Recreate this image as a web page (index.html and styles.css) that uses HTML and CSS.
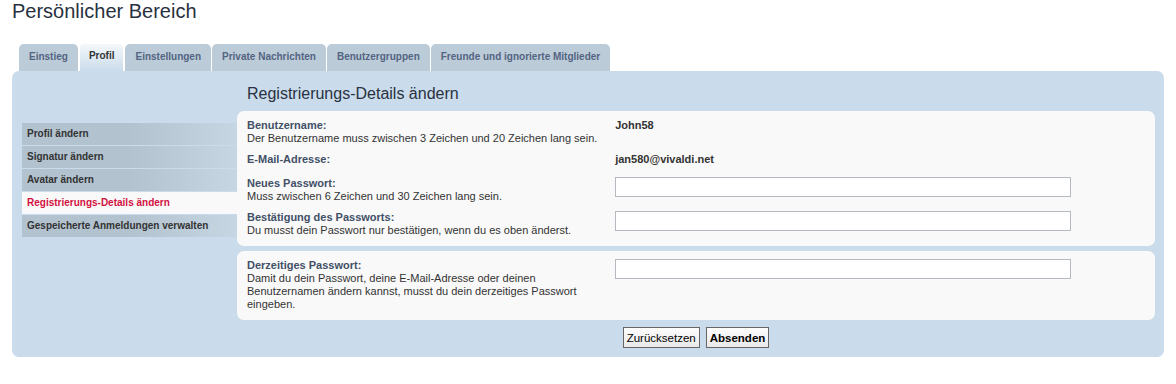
FILE: index.html
```html
<!DOCTYPE html>
<html lang="de">
<head>
  <meta charset="UTF-8" />
  <title>Persönlicher Bereich</title>
  <link rel="stylesheet" href="styles.css">
</head>
<body>

  <h1 class="seitentitel">Persönlicher Bereich</h1>

  <ul class="tabs">
    <li class="tab"><a href="#">Einstieg</a></li>
    <li class="tab aktiv"><a href="#">Profil</a></li>
    <li class="tab"><a href="#">Einstellungen</a></li>
    <li class="tab"><a href="#">Private Nachrichten</a></li>
    <li class="tab"><a href="#">Benutzergruppen</a></li>
    <li class="tab"><a href="#">Freunde und ignorierte Mitglieder</a></li>
  </ul>

  <div class="panel">
    <div class="cp-menu">
      <ul class="navigation">
        <li><a href="#">Profil ändern</a></li>
        <li><a href="#">Signatur ändern</a></li>
        <li><a href="#">Avatar ändern</a></li>
        <li class="aktiv"><a href="#">Registrierungs-Details ändern</a></li>
        <li><a href="#">Gespeicherte Anmeldungen verwalten</a></li>
      </ul>
    </div>

    <div class="cp-main">
      <h2>Registrierungs-Details ändern</h2>

      <form id="formular">
        <div class="box">
          <dl class="zeile">
            <dt><label>Benutzername:</label><br><span>Der Benutzername muss zwischen 3 Zeichen und 20 Zeichen lang sein.</span></dt>
            <dd><strong>John58</strong></dd>
          </dl>
          <dl class="zeile">
            <dt><label>E-Mail-Adresse:</label></dt>
            <dd><strong>jan580@vivaldi.net</strong></dd>
          </dl>
          <dl class="zeile">
            <dt><label for="neues_pw">Neues Passwort:</label><br><span>Muss zwischen 6 Zeichen und 30 Zeichen lang sein.</span></dt>
            <dd><input type="password" id="neues_pw" name="new_password"></dd>
          </dl>
          <dl class="zeile">
            <dt><label for="pw_bestaetigen">Bestätigung des Passworts:</label><br><span>Du musst dein Passwort nur bestätigen, wenn du es oben änderst.</span></dt>
            <dd><input type="password" id="pw_bestaetigen" name="password_confirm"></dd>
          </dl>
        </div>

        <div class="box">
          <dl class="zeile">
            <dt><label for="derzeitig">Derzeitiges Passwort:</label><br><span>Damit du dein Passwort, deine E-Mail-Adresse oder deinen Benutzernamen ändern kannst, musst du dein derzeitiges Passwort eingeben.</span></dt>
            <dd><input type="password" id="derzeitig" name="cur_password"></dd>
          </dl>
        </div>

        <div class="knoepfe">
          <button type="reset" class="knopf">Zurücksetzen</button>
          <button type="submit" class="knopf haupt">Absenden</button>
        </div>
      </form>
    </div>
  </div>

</body>
</html>
```

FILE: styles.css
```css
body {
  margin: 0;
  padding: 0 12px;
  font-family: "Liberation Sans", Arial, sans-serif;
  font-size: 11px;
  color: #333;
  background: #fff;
}

.seitentitel {
  margin: 0;
  font-size: 20px;
  font-weight: normal;
  line-height: 23px;
  color: #28313f;
}

.tabs {
  list-style: none;
  display: flex;
  align-items: flex-end;
  height: 28px;
  margin: 20px 0 0;
  padding: 0 0 0 7px;
}

.tab {
  margin-right: 1px;
}

.tab a {
  display: block;
  height: 27px;
  line-height: 25px;
  padding: 0 10px;
  box-sizing: border-box;
  background: #bccbd8;
  color: #536482;
  font-size: 10px;
  font-weight: bold;
  text-decoration: none;
  border-radius: 5px 5px 0 0;
}

.tab.aktiv a {
  height: 28px;
  line-height: 24px;
  color: #333;
  background: linear-gradient(to bottom, #f4f8fb, #cadceb);
  border: 1px solid #fff;
  border-bottom: none;
  padding: 0 9px;
}

.panel {
  display: flex;
  background: #cadceb;
  border-radius: 7px;
  padding-bottom: 9px;
}

.cp-menu {
  width: 215px;
  margin-left: 10px;
  padding-top: 52px;
}

.navigation {
  list-style: none;
  margin: 0;
  padding: 0;
}

.navigation li {
  margin-bottom: 1px;
}

.navigation a {
  display: block;
  height: 22px;
  line-height: 21px;
  padding-left: 5px;
  color: #333;
  font-size: 10px;
  font-weight: bold;
  text-decoration: none;
  background: linear-gradient(to right, #b2c2cf 50%, #c6d6e3 100%);
}

.navigation .aktiv a {
  color: #d31141;
  background: #f9f9f9;
}

.cp-main {
  flex: 1;
  margin-right: 9px;
}

.cp-main h2 {
  margin: 13px 0 7px 10px;
  font-size: 16px;
  line-height: 20px;
  font-weight: normal;
  color: #28313f;
}

.box {
  background: #f9f9f9;
  border-radius: 7px;
  padding: 4px 10px 5px;
}

.box + .box {
  margin-top: 5px;
}

.zeile {
  display: flex;
  margin: 0;
  padding: 4px 0;
  line-height: 13px;
}

.zeile dt {
  width: 41%;
  flex: none;
}

.zeile dt label {
  font-weight: bold;
  color: #425067;
}

.zeile dd {
  margin: 0 0 3px;
}

.zeile dd strong {
  color: #333;
}

.zeile input {
  display: block;
  width: 456px;
  height: 20px;
  box-sizing: border-box;
  border: 1px solid #b4bac0;
  background: #fff;
  padding: 2px;
  margin: 0;
}

.knoepfe {
  display: flex;
  justify-content: center;
  gap: 6px;
  margin-top: 7px;
}

.knopf {
  height: 21px;
  padding: 0 3px;
  font-family: "Liberation Sans", Arial, sans-serif;
  font-size: 11.5px;
  color: #000;
  border: 1px solid #666;
  border-radius: 0;
  background: linear-gradient(to bottom, #fdfdfd, #e9e9e9);
}

.knopf.haupt {
  font-weight: bold;
}
```
